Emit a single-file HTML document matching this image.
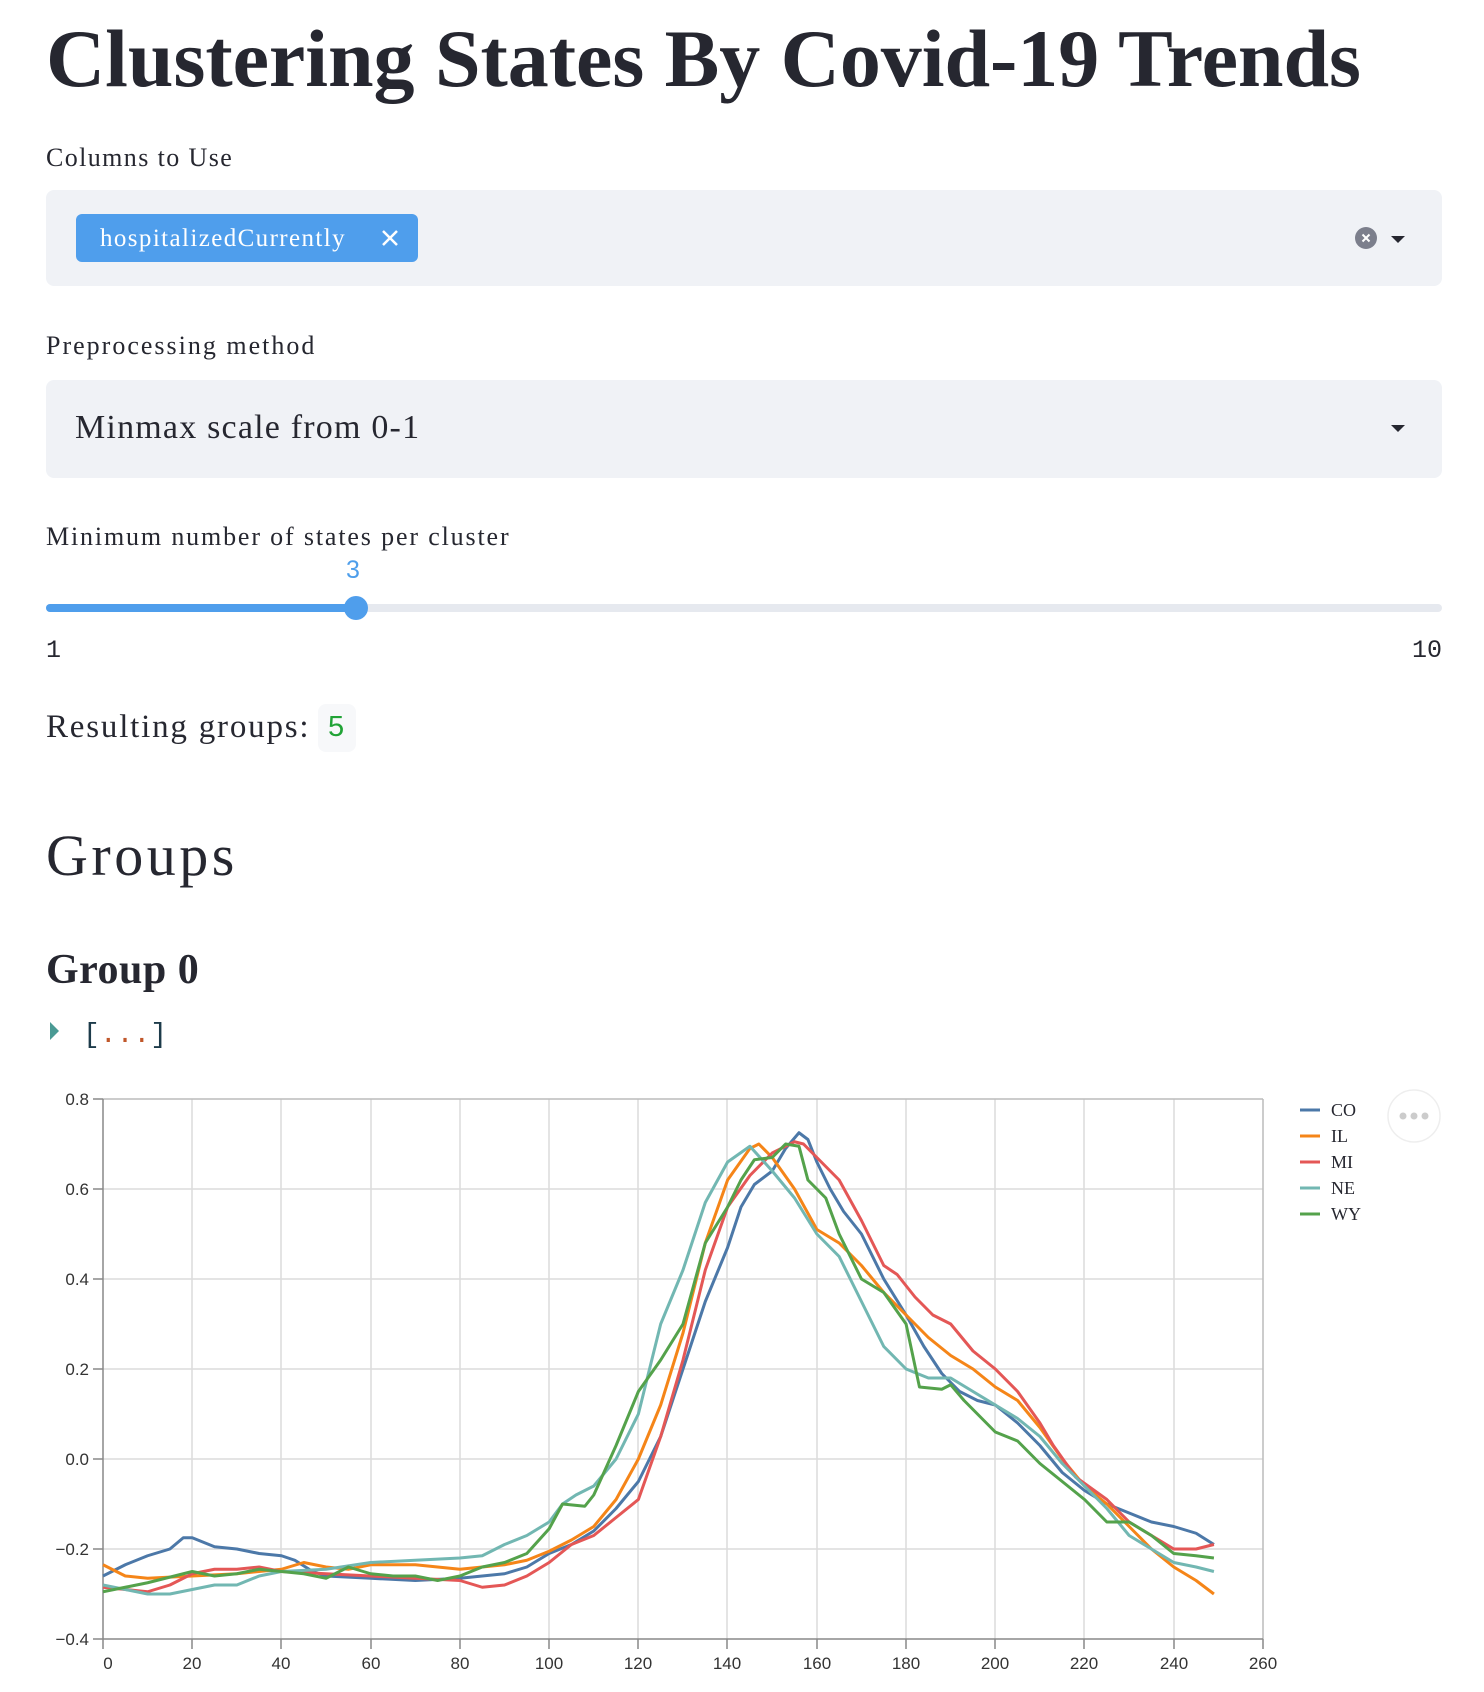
<!DOCTYPE html>
<html><head><meta charset="utf-8"><style>
body{margin:0;width:1484px;height:1692px;background:#fff;position:relative;overflow:hidden;color:#262730;font-family:"Liberation Serif",serif}
.a{position:absolute;white-space:nowrap}
.lbl{font-size:26px;line-height:1}
.box{position:absolute;left:46px;width:1396px;background:#f0f2f6;border-radius:8px}
.arr{position:absolute;width:0;height:0;border-left:7px solid transparent;border-right:7px solid transparent;border-top:7px solid #262730}
</style></head><body>
<div class="a" style="left:46px;top:14px;font-size:82px;font-weight:bold;line-height:1.1;letter-spacing:-0.05px">Clustering States By Covid-19 Trends</div>

<div class="a lbl" style="left:46px;top:145px;letter-spacing:1.4px">Columns to Use</div>
<div class="box" style="top:190px;height:96px"></div>
<div class="a" style="left:76px;top:214px;width:342px;height:48px;background:#4f9eec;border-radius:6px"></div>
<div class="a" style="left:100px;top:224px;font-size:25px;color:#fff;line-height:30px;letter-spacing:1.4px">hospitalizedCurrently</div>
<svg class="a" style="left:380px;top:228px" width="20" height="20"><path d="M3 3L17 17M17 3L3 17" stroke="#fff" stroke-width="2.5"/></svg>
<svg class="a" style="left:1355px;top:227px" width="22" height="22"><circle cx="11" cy="11" r="11" fill="#7c7f8c"/><path d="M7.5 7.5L14.5 14.5M14.5 7.5L7.5 14.5" stroke="#fff" stroke-width="2"/></svg>
<div class="arr" style="left:1391px;top:236px"></div>

<div class="a lbl" style="left:46px;top:333px;letter-spacing:2px">Preprocessing method</div>
<div class="box" style="top:380px;height:98px"></div>
<div class="a" style="left:75px;top:411px;font-size:34px;line-height:1;letter-spacing:1.2px">Minmax scale from 0-1</div>
<div class="arr" style="left:1391px;top:425px"></div>

<div class="a lbl" style="left:46px;top:524px;letter-spacing:1.85px">Minimum number of states per cluster</div>
<div class="a" style="left:346px;top:558px;font-family:'Liberation Sans',sans-serif;font-size:25px;color:#4e9eeb;line-height:1">3</div>
<div class="a" style="left:46px;top:604px;width:1396px;height:8px;background:#e6e9ef;border-radius:4px"></div>
<div class="a" style="left:46px;top:604px;width:310px;height:8px;background:#4f9eec;border-radius:4px"></div>
<div class="a" style="left:344px;top:596px;width:24px;height:24px;background:#4f9eec;border-radius:50%"></div>
<div class="a" style="left:46px;top:638px;font-family:'Liberation Mono',monospace;font-size:25px;line-height:1">1</div>
<div class="a" style="left:1412px;top:638px;font-family:'Liberation Mono',monospace;font-size:25px;line-height:1">10</div>

<div class="a" style="left:46px;top:711px;font-size:33px;line-height:1;letter-spacing:1.8px">Resulting groups:</div>
<div class="a" style="left:318px;top:704px;width:38px;height:48px;background:#f7f8fa;border-radius:8px"></div>
<div class="a" style="left:328px;top:713px;font-family:'Liberation Sans',sans-serif;font-size:29px;color:#21a336;line-height:1">5</div>

<div class="a" style="left:46px;top:827px;font-size:58px;line-height:1;letter-spacing:3.5px">Groups</div>
<div class="a" style="left:46px;top:949px;font-size:42px;font-weight:bold;line-height:1;letter-spacing:0.5px">Group 0</div>
<div class="a" style="left:50px;top:1022px;width:0;height:0;border-top:9px solid transparent;border-bottom:9px solid transparent;border-left:9px solid #4a9a94"></div>
<div class="a" style="left:83px;top:1022px;font-family:'Liberation Mono',monospace;font-size:28px;line-height:1;color:#1d3b4a">[<span style="color:#c0572a">...</span>]</div>

<svg class="a" style="left:0;top:0" width="1484" height="1692" font-family="Liberation Sans, sans-serif">
<g stroke="#dcdcdc" stroke-width="1.5">
<line x1="103" y1="1189" x2="1263" y2="1189"/><line x1="103" y1="1279" x2="1263" y2="1279"/><line x1="103" y1="1369" x2="1263" y2="1369"/><line x1="103" y1="1459" x2="1263" y2="1459"/><line x1="103" y1="1549" x2="1263" y2="1549"/>
<line x1="192" y1="1099" x2="192" y2="1639"/><line x1="281" y1="1099" x2="281" y2="1639"/><line x1="371" y1="1099" x2="371" y2="1639"/><line x1="460" y1="1099" x2="460" y2="1639"/><line x1="549" y1="1099" x2="549" y2="1639"/><line x1="638" y1="1099" x2="638" y2="1639"/><line x1="727" y1="1099" x2="727" y2="1639"/><line x1="817" y1="1099" x2="817" y2="1639"/><line x1="906" y1="1099" x2="906" y2="1639"/><line x1="995" y1="1099" x2="995" y2="1639"/><line x1="1084" y1="1099" x2="1084" y2="1639"/><line x1="1174" y1="1099" x2="1174" y2="1639"/>
</g>
<line x1="103" y1="1099" x2="1263" y2="1099" stroke="#bbb" stroke-width="1.5"/>
<line x1="1263" y1="1099" x2="1263" y2="1639" stroke="#bbb" stroke-width="1.5"/>
<g stroke="#888" stroke-width="1.5">
<line x1="103" y1="1099" x2="103" y2="1639"/><line x1="103" y1="1639" x2="1263" y2="1639"/>
<line x1="93" y1="1099" x2="103" y2="1099"/><line x1="93" y1="1189" x2="103" y2="1189"/><line x1="93" y1="1279" x2="103" y2="1279"/><line x1="93" y1="1369" x2="103" y2="1369"/><line x1="93" y1="1459" x2="103" y2="1459"/><line x1="93" y1="1549" x2="103" y2="1549"/><line x1="93" y1="1639" x2="103" y2="1639"/>
<line x1="103" y1="1639" x2="103" y2="1649"/><line x1="192" y1="1639" x2="192" y2="1649"/><line x1="281" y1="1639" x2="281" y2="1649"/><line x1="371" y1="1639" x2="371" y2="1649"/><line x1="460" y1="1639" x2="460" y2="1649"/><line x1="549" y1="1639" x2="549" y2="1649"/><line x1="638" y1="1639" x2="638" y2="1649"/><line x1="727" y1="1639" x2="727" y2="1649"/><line x1="817" y1="1639" x2="817" y2="1649"/><line x1="906" y1="1639" x2="906" y2="1649"/><line x1="995" y1="1639" x2="995" y2="1649"/><line x1="1084" y1="1639" x2="1084" y2="1649"/><line x1="1174" y1="1639" x2="1174" y2="1649"/><line x1="1263" y1="1639" x2="1263" y2="1649"/>
</g>
<g font-size="17" fill="#333" text-anchor="end">
<text x="89" y="1105">0.8</text><text x="89" y="1195">0.6</text><text x="89" y="1285">0.4</text><text x="89" y="1375">0.2</text><text x="89" y="1465">0.0</text><text x="89" y="1555">−0.2</text><text x="89" y="1645">−0.4</text>
</g>
<g font-size="17" fill="#333" text-anchor="middle">
<text x="108" y="1669">0</text><text x="192" y="1669">20</text><text x="281" y="1669">40</text><text x="371" y="1669">60</text><text x="460" y="1669">80</text><text x="549" y="1669">100</text><text x="638" y="1669">120</text><text x="727" y="1669">140</text><text x="817" y="1669">160</text><text x="906" y="1669">180</text><text x="995" y="1669">200</text><text x="1084" y="1669">220</text><text x="1174" y="1669">240</text><text x="1263" y="1669">260</text>
</g>
<g transform="translate(103,1099) scale(4.4615,-450) translate(0,-0.8)" fill="none" stroke-width="3" stroke-linejoin="round">
<polyline vector-effect="non-scaling-stroke" stroke="#4c78a8" points="0,-0.26 5,-0.235 10,-0.215 15,-0.2 18,-0.175 20,-0.175 25,-0.195 30,-0.2 35,-0.21 40,-0.215 43,-0.225 47,-0.25 50,-0.26 60,-0.265 70,-0.27 80,-0.265 85,-0.26 90,-0.255 95,-0.24 100,-0.21 105,-0.19 110,-0.16 115,-0.11 120,-0.05 125,0.05 130,0.2 135,0.35 140,0.47 143,0.56 146,0.61 150,0.64 153,0.69 156,0.725 158,0.71 160,0.66 163,0.6 166,0.55 170,0.5 175,0.4 180,0.32 184,0.25 188,0.19 192,0.15 196,0.13 200,0.12 205,0.08 210,0.03 215,-0.03 220,-0.07 225,-0.1 230,-0.12 235,-0.14 240,-0.15 245,-0.165 249,-0.19"/>
<polyline vector-effect="non-scaling-stroke" stroke="#f58518" points="0,-0.235 5,-0.26 10,-0.265 20,-0.26 30,-0.255 40,-0.245 45,-0.23 50,-0.24 55,-0.245 60,-0.235 70,-0.235 80,-0.245 90,-0.235 95,-0.225 100,-0.205 105,-0.18 110,-0.15 115,-0.09 120,0.0 125,0.12 130,0.28 135,0.48 140,0.62 145,0.69 147,0.7 150,0.67 155,0.6 160,0.51 165,0.48 170,0.43 175,0.37 180,0.32 185,0.27 190,0.23 195,0.2 200,0.16 205,0.13 210,0.07 215,0.0 220,-0.06 225,-0.1 230,-0.15 235,-0.2 240,-0.24 245,-0.27 249,-0.3"/>
<polyline vector-effect="non-scaling-stroke" stroke="#e45756" points="0,-0.285 5,-0.29 10,-0.295 15,-0.28 20,-0.255 25,-0.245 30,-0.245 35,-0.24 40,-0.25 50,-0.255 60,-0.26 70,-0.265 80,-0.27 85,-0.285 90,-0.28 95,-0.26 100,-0.23 105,-0.19 110,-0.17 115,-0.13 120,-0.09 125,0.05 130,0.22 135,0.42 140,0.56 145,0.63 150,0.68 155,0.705 157,0.7 160,0.67 165,0.62 170,0.53 175,0.43 178,0.41 182,0.36 186,0.32 190,0.3 195,0.24 200,0.2 205,0.15 210,0.08 213,0.03 218,-0.04 225,-0.09 230,-0.14 235,-0.17 240,-0.2 245,-0.2 249,-0.19"/>
<polyline vector-effect="non-scaling-stroke" stroke="#72b7b2" points="0,-0.28 5,-0.29 10,-0.3 15,-0.3 20,-0.29 25,-0.28 30,-0.28 35,-0.26 40,-0.25 50,-0.245 60,-0.23 70,-0.225 80,-0.22 85,-0.215 90,-0.19 95,-0.17 100,-0.14 103,-0.1 106,-0.08 110,-0.06 115,0.0 120,0.1 125,0.3 130,0.42 135,0.57 140,0.66 145,0.695 150,0.64 155,0.58 160,0.5 165,0.45 170,0.35 175,0.25 180,0.2 185,0.18 190,0.18 195,0.15 200,0.12 205,0.09 210,0.05 215,-0.01 220,-0.06 225,-0.11 230,-0.17 235,-0.2 240,-0.23 245,-0.24 249,-0.25"/>
<polyline vector-effect="non-scaling-stroke" stroke="#54a24b" points="0,-0.295 10,-0.275 20,-0.25 25,-0.26 30,-0.255 35,-0.245 40,-0.25 45,-0.255 50,-0.265 55,-0.24 60,-0.255 65,-0.26 70,-0.26 75,-0.27 80,-0.26 85,-0.24 90,-0.23 95,-0.21 100,-0.155 103,-0.1 108,-0.105 110,-0.08 115,0.03 120,0.15 125,0.22 130,0.3 135,0.48 140,0.56 143,0.62 146,0.665 150,0.67 153,0.7 156,0.695 158,0.62 162,0.58 165,0.5 170,0.4 175,0.37 180,0.3 183,0.16 188,0.155 190,0.165 193,0.13 197,0.09 200,0.06 205,0.04 210,-0.01 215,-0.05 220,-0.09 225,-0.14 230,-0.14 235,-0.17 240,-0.21 245,-0.215 249,-0.22"/>
</g>
<g stroke-width="3">
<line x1="1300" y1="1110" x2="1320" y2="1110" stroke="#4c78a8"/>
<line x1="1300" y1="1136" x2="1320" y2="1136" stroke="#f58518"/>
<line x1="1300" y1="1162" x2="1320" y2="1162" stroke="#e45756"/>
<line x1="1300" y1="1188" x2="1320" y2="1188" stroke="#72b7b2"/>
<line x1="1300" y1="1214" x2="1320" y2="1214" stroke="#54a24b"/>
</g>
<g font-family="Liberation Serif, serif" font-size="18" fill="#262730">
<text x="1331" y="1116">CO</text><text x="1331" y="1142">IL</text><text x="1331" y="1168">MI</text><text x="1331" y="1194">NE</text><text x="1331" y="1220">WY</text>
</g>
<circle cx="1414" cy="1116" r="26" fill="#fff" stroke="#eee" stroke-width="1.5"/>
<g fill="#ccc"><circle cx="1403" cy="1116" r="3.5"/><circle cx="1414" cy="1116" r="3.5"/><circle cx="1425" cy="1116" r="3.5"/></g>
</svg>
</body></html>
